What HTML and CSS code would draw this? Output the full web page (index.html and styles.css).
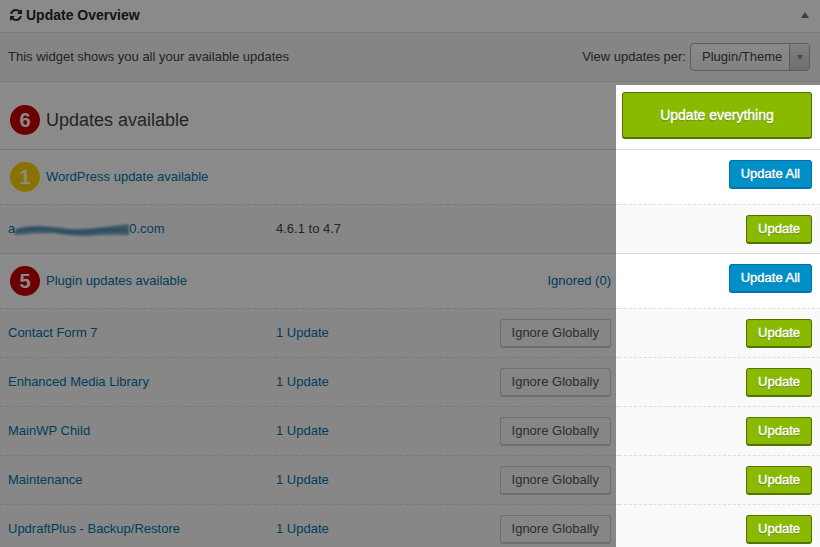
FILE: index.html
```html
<!DOCTYPE html>
<html lang="en">
<head>
  <meta charset="UTF-8">
  <meta name="viewport" content="width=device-width, initial-scale=1.0">
  <title>Update Overview</title>
  <link rel="stylesheet" href="styles.css">
</head>
<body>
<main class="widget">
  <header class="widget-header">
    <svg class="refresh-icon" viewBox="0 0 1536 1536" aria-hidden="true">
      <path d="M1511 928q0 5-1 7-64 268-268 434.500T764 1536q-146 0-282.500-55T238 1324l-129 129q-19 19-45 19t-45-19-19-45V960q0-26 19-45t45-19h448q26 0 45 19t19 45-19 45l-137 137q71 66 161 102t187 36q134 0 250-65t186-179q11-17 53-117 8-23 30-23h192q13 0 22.500 9.500t9.500 22.500zm25-800v448q0 26-19 45t-45 19h-448q-26 0-45-19t-19-45 19-45l138-138Q969 256 768 256q-134 0-250 65T332 500q-11 17-53 117-8 23-30 23H50q-13 0-22.500-9.500T18 608v-7q65-268 270-434.500T768 0q146 0 284 55.500T1297 212l130-129q19-19 45-19t45 19 19 45z"/>
    </svg>
    <h1>Update Overview</h1>
    <button class="toggle" aria-label="Toggle panel"></button>
  </header>
  <div class="toolbar">
    <p>This widget shows you all your available updates</p>
    <label for="view">View updates per:</label>
    <span class="select">
      <select id="view">
        <option>Plugin/Theme</option>
      </select>
    </span>
  </div>
  <div class="updates">
    <section class="total">
      <span class="badge red">6</span>
      <h2>Updates available</h2>
      <button class="button green big">Update everything</button>
    </section>
    <section class="group">
      <div class="group-header">
        <span class="badge yellow">1</span>
        <a class="group-title" href="#">WordPress update available</a>
        <div class="action"><button class="button blue">Update All</button></div>
      </div>
      <table>
        <tr>
          <td class="name">
            <a href="#">a<svg class="smudge" viewBox="0 0 114 14" aria-hidden="true">
              <path d="M0 6Q14 2 28 3T56 6Q74 6 88 4L114 1V12Q90 11 74 13Q54 13 38 10Q18 10 0 12Z"/>
              <path class="streak" d="M2 8Q20 4 38 7T70 9Q90 6 112 7"/>
            </svg>0.com</a>
          </td>
          <td>4.6.1 to 4.7</td>
          <td class="ignore"></td>
          <td class="action"><button class="button green">Update</button></td>
        </tr>
      </table>
    </section>
    <section class="group">
      <div class="group-header">
        <span class="badge red">5</span>
        <a class="group-title" href="#">Plugin updates available</a>
        <a href="#">Ignored (0)</a>
        <div class="action"><button class="button blue">Update All</button></div>
      </div>
      <table>
        <tr>
          <td class="name"><a href="#">Contact Form 7</a></td>
          <td><a href="#">1 Update</a></td>
          <td class="ignore"><button class="button">Ignore Globally</button></td>
          <td class="action"><button class="button green">Update</button></td>
        </tr>
        <tr>
          <td class="name"><a href="#">Enhanced Media Library</a></td>
          <td><a href="#">1 Update</a></td>
          <td class="ignore"><button class="button">Ignore Globally</button></td>
          <td class="action"><button class="button green">Update</button></td>
        </tr>
        <tr>
          <td class="name"><a href="#">MainWP Child</a></td>
          <td><a href="#">1 Update</a></td>
          <td class="ignore"><button class="button">Ignore Globally</button></td>
          <td class="action"><button class="button green">Update</button></td>
        </tr>
        <tr>
          <td class="name"><a href="#">Maintenance</a></td>
          <td><a href="#">1 Update</a></td>
          <td class="ignore"><button class="button">Ignore Globally</button></td>
          <td class="action"><button class="button green">Update</button></td>
        </tr>
        <tr>
          <td class="name"><a href="#">UpdraftPlus - Backup/Restore</a></td>
          <td><a href="#">1 Update</a></td>
          <td class="ignore"><button class="button">Ignore Globally</button></td>
          <td class="action"><button class="button green">Update</button></td>
        </tr>
      </table>
    </section>
    <div class="spotlight"></div>
  </div>
</main>
</body>
</html>
```

FILE: styles.css
```css
* {
  box-sizing: border-box;
}

body {
  font-family: "Helvetica Neue", "Liberation Sans", Arial, sans-serif;
  font-size: 13px;
  line-height: 20px;
  color: #444;
  background-color: #fff;
  margin: 0;
}

a {
  color: #0073aa;
  text-decoration: none;
}

h1, h2, p {
  margin: 0;
}

.widget {
  height: 100vh;
  overflow: hidden;
}

.widget-header {
  display: flex;
  align-items: center;
  gap: 4px;
  height: 33px;
  padding: 0 11px 2px 10px;
  border-bottom: 1px solid #e5e5e5;
}

.widget-header h1 {
  flex: 1;
  font-size: 14px;
  line-height: 20px;
  color: #23282d;
}

.refresh-icon {
  width: 12px;
  height: 12px;
  fill: #23282d;
}

.toggle {
  width: 8px;
  height: 6px;
  padding: 0;
  border: none;
  background-color: #72777c;
  clip-path: polygon(50% 0, 100% 100%, 0 100%);
}

.toolbar {
  display: flex;
  align-items: center;
  gap: 4px;
  height: 49px;
  padding: 0 10px 0 8px;
  background-color: #f5f5f5;
  border-bottom: 1px solid #dfdfdf;
}

.toolbar p {
  flex: 1;
}

.select {
  position: relative;
}

.select select {
  display: block;
  width: 120px;
  height: 28px;
  padding: 0 11px;
  font: inherit;
  color: #444;
  appearance: none;
  border: 1px solid #aaa;
  border-radius: 4px;
  background: linear-gradient(#fff, #f0f0f0);
}

/* drop-down arrow box */
.select::before {
  content: "";
  position: absolute;
  top: 1px;
  right: 1px;
  bottom: 1px;
  width: 19px;
  border-left: 1px solid #aaa;
  border-radius: 0 3px 3px 0;
  background: linear-gradient(#eee, #ccc);
  pointer-events: none;
}

.select::after {
  content: "";
  position: absolute;
  top: 12px;
  right: 7px;
  width: 6px;
  height: 5px;
  background-color: #888;
  clip-path: polygon(0 0, 100% 0, 50% 100%);
  pointer-events: none;
}

.updates {
  position: relative;
}

.total {
  display: flex;
  align-items: center;
  height: 68px;
  padding: 10px 8px 2px 10px;
  border-bottom: 1px solid #dfdfdf;
}

.total h2 {
  flex: 1;
  font-size: 18px;
  font-weight: normal;
}

.badge {
  width: 30px;
  height: 30px;
  margin-right: 6px;
  border-radius: 50%;
  color: #fff;
  font-size: 20px;
  line-height: 30px;
  font-weight: bold;
  text-align: center;
}

.red {
  background-color: #c80000;
}

.yellow {
  background-color: #ffd300;
}

.group {
  border-bottom: 1px solid #dfdfdf;
}

.group-header {
  display: flex;
  align-items: center;
  height: 54px;
  padding: 10px 8px 10px 10px;
}

.group-title {
  flex: 1;
}

.group-header .action {
  align-self: flex-start;
  width: 201px;
  text-align: right;
}

table {
  width: 100%;
  table-layout: fixed;
  border-collapse: separate;
  border-spacing: 0;
  background-color: #fafafa;
}

td {
  height: 49px;
  padding: 0 8px 0 0;
  border-top: 1px dashed #dfdfdf;
}

td.name {
  width: 276px;
  padding-left: 8px;
}

td.ignore {
  text-align: right;
}

td.action {
  width: 201px;
  text-align: right;
}

.button {
  height: 29px;
  padding: 0 11px;
  font: inherit;
  color: #555;
  vertical-align: top;
  border: 1px solid #ccc;
  border-bottom-width: 2px;
  border-radius: 3px;
  background-color: #f7f7f7;
}

.green, .blue {
  color: #fff;
  -webkit-text-stroke: 0.4px #fff;
}

.green {
  border-color: #537200;
  background-color: #8aba00;
  text-shadow: 0 1px 1px #537200;
}

.blue {
  border-color: #0073aa;
  background-color: #0090c8;
  text-shadow: 0 1px 1px #006799;
}

.big {
  align-self: flex-start;
  width: 190px;
  height: 47px;
  font-size: 14px;
}

.smudge {
  width: 114px;
  height: 14px;
  vertical-align: middle;
  fill: #6fa6c0;
  filter: blur(1px);
}

.smudge .streak {
  fill: none;
  stroke: #4a8cb0;
  stroke-width: 2;
}

/* dims everything except the update buttons column */
.spotlight {
  position: absolute;
  top: 3px;
  right: 0;
  bottom: 0;
  width: 204px;
  box-shadow: 0 0 0 100vmax rgba(0, 0, 0, 0.46);
  pointer-events: none;
}
```
